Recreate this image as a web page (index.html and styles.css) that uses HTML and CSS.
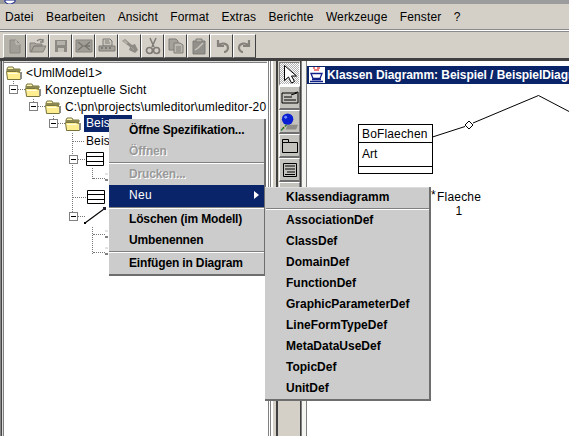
FILE: index.html
```html
<!DOCTYPE html>
<html lang="de">
<head>
  <meta charset="UTF-8">
  <title>UML Editor</title>
  <meta name="viewport" content="width=device-width, initial-scale=1.0"/>
  <link rel="stylesheet" href="styles.css">
</head>
<body>
<svg class="defs" width="0" height="0">
  <symbol id="folder" viewBox="0 0 16 14">
    <path d="M1 3 2 1h5l1 2h6v2H1z" fill="#fff7b0" stroke="#77733c"/>
    <path d="M1 3h13v10H1z" fill="#8c8850"/>
    <path d="M0.500 5.500h10l4 1 1-0 -1 7h-13z" fill="#ffee90" stroke="#77733c"/>
    <path d="M2 7h10v1H2z" fill="#fffde0"/>
    <path d="M14 6h2v7h-2z" fill="#8c8c84"/>
  </symbol>
  <symbol id="table" viewBox="0 0 18 14">
    <path d="M0.500 0.500h17v13h-17zM0.500 4.500h17M0.500 9.500h17" fill="#fff" stroke="#000"/>
  </symbol>
  <symbol id="leaf" viewBox="0 0 4 10">
    <path d="M0 1h3" stroke="#c8c8c8"/>
    <path d="M0 7h3" stroke="#000"/>
  </symbol>
</svg>

<div class="app">
  <div class="window-title">
    <svg class="window-icon" width="14" height="4" viewBox="0 0 14 4"><path d="M2 0h10v2L8 4H5L2 2z" fill="#fff" stroke="#12208a"/></svg>
  </div>

  <nav class="menubar">
    <span>Datei</span><span>Bearbeiten</span><span>Ansicht</span><span>Format</span><span>Extras</span><span>Berichte</span><span>Werkzeuge</span><span>Fenster</span><span>?</span>
  </nav>

  <div class="toolbar">
    <button class="tool tool-down"><svg width="16" height="16" viewBox="0 0 16 16"><path d="M3 2h6l4 4v9H3z" fill="#a19e98" stroke="#8b8882"/><path d="M9 2v4h4" fill="none" stroke="#c8c5bd"/></svg></button>
    <button class="tool"><svg width="18" height="16" viewBox="0 0 18 16"><path d="M1 5h5l1 1h6v2H5L2 14H1zM2 14l3-6h12l-3 6z" fill="#aaa79f" stroke="#85827c"/><path d="M8 3c2-2 5-2 6 0M14 1v3h-3" fill="none" stroke="#85827c" stroke-width="1.300"/></svg></button>
    <button class="tool"><svg width="16" height="16" viewBox="0 0 16 16"><path d="M2 2h12v12H2z" fill="#8d8a84"/><path d="M4 3h8v4H4z" fill="#b5b2aa"/><path d="M5 10h6v4H5z" fill="#c4c1b9"/></svg></button>
    <button class="tool"><svg width="18" height="16" viewBox="0 0 18 16"><path d="M1 2h16v12H1z" fill="#a19e98" stroke="#86837d"/><path d="M3 4l5 4-5 4M15 4l-5 4 5 4M9 8h6" fill="none" stroke="#77746e" stroke-width="1.300"/></svg></button>
    <button class="tool"><svg width="18" height="16" viewBox="0 0 18 16"><path d="M5 1h7l2 2v5H5z" fill="#c8c5bd" stroke="#7f7c76"/><path d="M7 3h4M7 5h5" stroke="#7f7c76"/><path d="M1 8h16v5H1z" fill="#a5a29c" stroke="#7f7c76"/><path d="M3 10h2M7 10h2M11 10h2" stroke="#55524e"/></svg></button>
    <button class="tool"><svg width="18" height="16" viewBox="0 0 18 16"><path d="M1 3l3-2 7 6 3-1 3 6-3 3-6-3 1-3z" fill="#8e8b85"/><path d="M2 3l2-1 3 3-2 1z" fill="#b5b2aa"/><path d="M10 9l3 3" stroke="#a8a59f"/></svg></button>
    <button class="tool"><svg width="16" height="18" viewBox="0 0 16 18"><path d="M5 1l4 9M11 1l-4 9" fill="none" stroke="#7f7c76" stroke-width="1.500"/><circle cx="4.500" cy="13.500" r="3" fill="none" stroke="#7f7c76" stroke-width="1.700"/><circle cx="11.500" cy="13.500" r="3" fill="none" stroke="#7f7c76" stroke-width="1.700"/></svg></button>
    <button class="tool"><svg width="16" height="16" viewBox="0 0 16 16"><path d="M1 1h7l2 2v9H1z" fill="#a5a29c" stroke="#7f7c76"/><path d="M6 5h6l3 2v8H6z" fill="#bcb9b1" stroke="#7f7c76"/><path d="M8 9h5M8 11h5M8 13h5" stroke="#7f7c76"/></svg></button>
    <button class="tool"><svg width="16" height="18" viewBox="0 0 16 18"><path d="M2 4h12v13H2z" fill="#92908a" stroke="#7f7c76"/><path d="M5 2h6v3H5z" fill="#b5b2aa" stroke="#7f7c76"/><path d="M4 13l3-2 5-5" fill="none" stroke="#c8c5bd" stroke-width="1.500"/></svg></button>
    <button class="tool"><svg width="16" height="14" viewBox="0 0 16 14"><path d="M4 1v6h6M4 7c3-4 10-3 10 2 0 2-2 4-4 4" fill="none" stroke="#85827c" stroke-width="2.200"/></svg></button>
    <button class="tool"><svg width="16" height="14" viewBox="0 0 16 14"><path d="M12 1v6H6M12 7C9 3 2 4 2 9c0 2 2 4 4 4" fill="none" stroke="#85827c" stroke-width="2.200"/></svg></button>
  </div>

  <main class="workspace">
    <section class="tree">
      <svg class="tree-lines" width="120" height="200" viewBox="0 0 120 200">
        <path d="M13.500 20v6M33.500 38v5M53.500 55v4M72.500 72v85M92.500 107v11M92.500 166v28" fill="none" stroke="#777" stroke-dasharray="1 1"/>
      </svg>
      <div class="node level-0"><svg class="folder"><use href="#folder"/></svg><span class="label">&lt;UmlModel1&gt;</span></div>
      <div class="node level-1"><i class="expander"></i><i class="twig"></i><svg class="folder"><use href="#folder"/></svg><span class="label">Konzeptuelle Sicht</span></div>
      <div class="node level-2"><i class="expander"></i><i class="twig"></i><svg class="folder"><use href="#folder"/></svg><span class="label">C:\pn\projects\umleditor\umleditor-20</span></div>
      <div class="node level-3"><i class="expander"></i><i class="twig"></i><svg class="folder"><use href="#folder"/></svg><span class="label selected">Beis</span></div>
      <div class="node level-4"><i class="twig twig-text"></i><span class="label label-flush">Beis</span></div>
      <div class="node level-4-box"><i class="expander"></i><i class="twig"></i><svg class="table"><use href="#table"/></svg></div>
      <div class="node level-5"><i class="twig twig-leaf"></i><svg class="leaf"><use href="#leaf"/></svg></div>
      <div class="node level-4"><i class="twig twig-long"></i><svg class="table"><use href="#table"/></svg></div>
      <div class="node level-4-box"><i class="expander"></i><i class="twig"></i>
        <svg class="assoc" width="22" height="18" viewBox="0 0 22 18"><path d="M1 16 20 2" stroke="#000" stroke-width="1.100"/><path d="M19 0h3v3h-3z" fill="#223"/><path d="M0 15h2v2H0z" fill="#000"/></svg>
      </div>
      <div class="node level-5"><i class="twig twig-leaf"></i><svg class="leaf"><use href="#leaf"/></svg></div>
      <div class="node level-5"><i class="twig twig-leaf"></i><svg class="leaf"><use href="#leaf"/></svg></div>
    </section>

    <div class="splitter"></div>

    <aside class="palette">
      <button class="pal pal-on"><svg width="16" height="20" viewBox="0 0 16 20"><path d="M2.500 1.500v15l4-3.500 3 6 3-1.500-3-5.500h5z" fill="#fff" stroke="#000"/></svg></button>
      <button class="pal"><svg width="18" height="14" viewBox="0 0 18 14"><path d="M1 2h12l4-1v11H1z" fill="none" stroke="#000"/><path d="M3 6h8M3 9h12M10 4l6-2" stroke="#000"/></svg></button>
      <button class="pal"><svg width="20" height="20" viewBox="0 0 20 20"><path d="M8 13h11l-2 5H6z" fill="#8f8d88"/><circle cx="8" cy="7" r="6" fill="#0a1fd0"/><circle cx="6" cy="5" r="1.500" fill="#6f8cff"/><path d="M7 13 1 19" stroke="#2e7d32" stroke-width="1.500"/><path d="M2 15h3v2" stroke="#e8e4a0"/></svg></button>
      <button class="pal"><svg width="18" height="16" viewBox="0 0 18 16"><path d="M1.500 14.500v-13h6v3h9v10z" fill="none" stroke="#000"/><path d="M1.500 4.500h6" stroke="#000"/></svg></button>
      <button class="pal"><svg width="16" height="16" viewBox="0 0 16 16"><path d="M1.500 1.500h13v13h-13z" fill="none" stroke="#000"/><path d="M3 4h10M3 7h10M5 10h8M3 12.500h10" stroke="#000"/></svg></button>
      <button class="pal"></button>
    </aside>

    <section class="desktop">
      <div class="frame-title">
        <svg width="16" height="16" viewBox="0 0 16 16"><path d="M0 0h16v16H0z" fill="#fff"/><path d="M4 1h2M8 1h3M5 3h5" stroke="#e00000" stroke-width="1.200"/><path d="M2 6.500h11l-2 5H4zM3 12.500h9M1 14.500h13" fill="#fff" stroke="#12208a" stroke-width="1.300"/></svg>
        <span>Klassen Diagramm: Beispiel / BeispielDiagr</span>
      </div>
      <div class="canvas">
        <svg class="edges" width="263" height="60" viewBox="0 0 263 60">
          <path d="M125.500 53 158 42.500M166 39 231.500 11.500 263 28" fill="none" stroke="#000"/>
          <path d="M162 37l4 4-4 4-4-4z" fill="#fff" stroke="#000"/>
        </svg>
        <div class="uml-class">
          <div class="uml-name">BoFlaechen</div>
          <div class="uml-attrs">Art</div>
          <div class="uml-ops"></div>
        </div>
        <div class="role role-star">*</div>
        <div class="role role-name">Flaeche<br>1</div>
      </div>
    </section>
  </main>

  <ul class="popup popup-main">
    <li>Öffne Spezifikation...</li>
    <li class="off">Öffnen</li>
    <li class="sep"></li>
    <li class="off">Drucken...</li>
    <li class="active">Neu<i class="arrow"></i></li>
    <li class="sep"></li>
    <li>Löschen (im Modell)</li>
    <li>Umbenennen</li>
    <li class="sep"></li>
    <li>Einfügen in Diagram</li>
  </ul>

  <ul class="popup popup-sub">
    <li>Klassendiagramm</li>
    <li class="sep"></li>
    <li>AssociationDef</li>
    <li>ClassDef</li>
    <li>DomainDef</li>
    <li>FunctionDef</li>
    <li>GraphicParameterDef</li>
    <li>LineFormTypeDef</li>
    <li>MetaDataUseDef</li>
    <li>TopicDef</li>
    <li>UnitDef</li>
  </ul>
</div>
</body>
</html>
```

FILE: styles.css
```css
* {
  box-sizing: border-box;
}
html, body {
  margin: 0;
  height: 100%;
  overflow: hidden;
}
body {
  background-color: #d4d0c8;
  color: #000;
  font-family: "Liberation Sans", Arial, sans-serif;
  font-size: 12px;
}
.defs {
  position: absolute;
}
.app {
  position: relative;
  display: flex;
  flex-direction: column;
  height: 436px;
  overflow: hidden;
}
.window-title {
  height: 4px;
  flex: none;
  padding-left: 3px;
  background-color: #9c9c9c;
  overflow: hidden;
}
.window-icon {
  display: block;
}
.menubar {
  display: flex;
  flex: none;
  align-items: center;
  gap: 12.4px;
  height: 26px;
  padding: 1px 0 0 5px;
  letter-spacing: 0.12px;
  border-bottom: 1px solid #8a8a8a;
}
.toolbar {
  display: flex;
  flex: none;
  align-items: center;
  height: 31px;
  padding: 2px 0 0 3px;
  border-top: 1px solid #fff;
  border-bottom: 3px solid #404040;
  box-shadow: inset 0 1px 0 #8a8a8a;
}
.tool {
  display: flex;
  align-items: center;
  justify-content: center;
  width: 23px;
  height: 24px;
  padding: 0;
  background-color: #d4d0c8;
  border: 1px solid;
  border-color: #fff #404040 #606060 #fff;
}
.tool-down {
  background-color: #b8b5ad;
}
.workspace {
  display: flex;
  flex: 1;
  min-height: 0;
}
.tree {
  position: relative;
  display: grid;
  grid-template-rows: 17px 17px 17px 17px 18px 18px 20px 18px 20px 17px 18px;
  align-content: start;
  width: 267px;
  flex: none;
  padding-top: 3px;
  background-color: #fff;
  box-shadow: inset 1px 0 #888, inset 2px 0 #444, inset 3px 0 #ddd, inset 4px 0 #808080, inset 0 1px #ddd, inset 0 2px #808080;
  overflow: hidden;
}
.tree-lines {
  position: absolute;
  top: 0;
  left: 0;
}
.node {
  position: relative;
  display: flex;
  align-items: center;
  min-width: 0;
  white-space: nowrap;
}
.level-0 { padding-left: 6px; }
.level-1 { padding-left: 9px; }
.level-2 { padding-left: 29px; }
.level-3 { padding-left: 49px; }
.level-4 { padding-left: 73px; }
.level-4-box { padding-left: 69px; }
.level-5 { padding-left: 93px; }
.expander {
  position: relative;
  flex: none;
  width: 9px;
  height: 9px;
  background-color: #fff;
  border: 1px solid #808080;
}
.expander::after {
  content: "";
  position: absolute;
  left: 1px;
  top: 3px;
  width: 5px;
  height: 1px;
  background-color: #000;
}
.twig {
  flex: none;
  width: 7px;
  height: 0;
  border-top: 1px dotted #777;
}
.twig-text {
  width: 11px;
}
.twig-long {
  width: 13px;
}
.twig-leaf {
  width: 12px;
}
.folder {
  flex: none;
  width: 16px;
  height: 14px;
}
.table {
  flex: none;
  width: 18px;
  height: 14px;
  margin-left: 1px;
}
.leaf {
  flex: none;
  width: 4px;
  height: 10px;
}
.assoc {
  flex: none;
  margin-left: -1px;
}
.label {
  padding: 0 2px;
  margin-left: 2px;
  letter-spacing: 0.12px;
}
.label-flush {
  margin-left: 0;
}
.selected {
  display: block;
  align-self: stretch;
  width: 48px;
  padding-top: 1px;
  margin-left: 3px;
  background-color: #0a246a;
  color: #fff;
}
.splitter {
  width: 10px;
  flex: none;
  background: linear-gradient(90deg, #fff 0 1px, #808080 1px 2px, #fff 2px 3px, #808080 3px 4px, #fff 4px 6px, #d4d0c8 6px);
  border-right: 1px solid #404040;
}
.palette {
  display: flex;
  flex-direction: column;
  width: 24px;
  flex: none;
  padding: 1px 0 0 1px;
  border-left: 1px solid #404040;
  border-right: 1px solid #404040;
}
.pal {
  display: flex;
  align-items: center;
  justify-content: center;
  width: 21px;
  height: 24px;
  flex: none;
  padding: 0;
  background-color: #c4c2bc;
  border: 1px solid;
  border-color: #fff #808080 #707070 #fff;
  border-bottom-width: 2px;
}
.pal-on {
  background-color: #fff;
  background-image: conic-gradient(#fff 25%, #b0b0b0 0 50%, #fff 0 75%, #b0b0b0 0);
  background-size: 2px 2px;
  border-color: #808080 #fff #fff #808080;
}
.desktop {
  display: flex;
  flex-direction: column;
  flex: 1;
  min-width: 0;
  padding: 5px 0 0 6px;
  background-color: #fff;
  box-shadow: inset 1px 0 #808080, inset 5px 0 #f4f4f0, inset 6px 0 #808080;
}
.frame-title {
  display: flex;
  align-items: center;
  gap: 2px;
  flex: none;
  height: 18px;
  padding-left: 2px;
  background-color: #0a246a;
  color: #fff;
  font-weight: bold;
  letter-spacing: -0.06px;
  white-space: nowrap;
  overflow: hidden;
}
.frame-title svg {
  flex: none;
}
.canvas {
  position: relative;
  flex: 1;
}
.edges {
  position: absolute;
  left: 0;
  top: 0;
}
.uml-class {
  position: absolute;
  left: 51px;
  top: 40px;
  width: 75px;
  height: 50px;
  background-color: #fff;
  border: 1px solid #000;
  letter-spacing: 0.15px;
}
.uml-name {
  height: 18px;
  padding: 2px 3px;
  line-height: 14px;
  border-bottom: 1px solid #000;
}
.uml-attrs {
  height: 24px;
  padding: 4px 3px;
  line-height: 14px;
  letter-spacing: 0;
  border-bottom: 1px solid #000;
}
.role {
  position: absolute;
  line-height: 14px;
}
.role-star {
  left: 124px;
  top: 104px;
}
.role-name {
  left: 130px;
  top: 106px;
  text-align: center;
  letter-spacing: 0.2px;
}
.popup {
  position: absolute;
  margin: 0;
  padding: 0;
  list-style: none;
  background-color: #ccc;
  font-weight: bold;
  border-right: 2px solid #6e6e6e;
  border-bottom: 2px solid #6e6e6e;
}
.popup li {
  position: relative;
  height: 21px;
  padding-left: 20px;
  line-height: 21px;
  white-space: nowrap;
}
.popup .sep {
  height: 2px;
  background-color: #fff;
  border-top: 1px solid #808080;
}
.popup .off {
  color: #999;
  text-shadow: 1px 1px 0 #fff;
}
.popup .active {
  height: 22px;
  background-color: #0a246a;
  color: #fff;
  font-weight: normal;
  letter-spacing: 0.3px;
}
.arrow {
  position: absolute;
  right: 5px;
  top: 6px;
  border-left: 5px solid #fff;
  border-top: 4px solid transparent;
  border-bottom: 4px solid transparent;
}
.popup-main {
  left: 109px;
  top: 119px;
  width: 157px;
  padding-top: 1px;
  letter-spacing: -0.15px;
}
.popup-sub {
  left: 265px;
  top: 187px;
  width: 166px;
  padding-left: 1px;
  box-shadow: inset 0 1px #ddd;
}
```
